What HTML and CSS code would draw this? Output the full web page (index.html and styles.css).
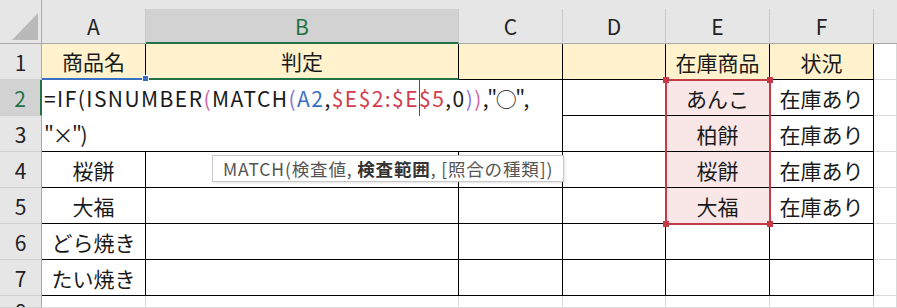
FILE: index.html
```html
<!DOCTYPE html>
<html lang="ja">
<head>
    <meta charset="UTF-8">
    <title>在庫判定</title>
    <link rel="stylesheet" href="styles.css">
</head>
<body>
    <div class="sheet">
        <div class="corner">
            <svg width="42" height="44" viewBox="0 0 42 44"><polygon points="38,13 38,40 12,40" fill="#b9b9b9"/></svg>
        </div>
        <div class="strip"></div>

        <div class="ch">A</div>
        <div class="ch sel">B</div>
        <div class="ch">C</div>
        <div class="ch">D</div>
        <div class="ch">E</div>
        <div class="ch">F</div>
        <div class="ch last"></div>

        <div class="rh">1</div>
        <div class="c y ref-top">商品名<span class="handle"></span></div>
        <div class="c y act-top">判定</div>
        <div class="c y"></div>
        <div class="c y"></div>
        <div class="c y">在庫商品</div>
        <div class="c y">状況</div>
        <div class="g"></div>

        <div class="rh sel">2</div>
        <div class="edit">=IF(ISNUMBER<span class="p2">(</span>MATCH<span class="p3">(</span><span class="r1">A2</span>,<span class="r2">$E$2:$E<span class="caret"></span>$5</span>,0<span class="p3">)</span><span class="p2">)</span><span class="tight">,"○",<br>"×")</span></div>
        <div class="c"></div>
        <div class="c pink">あんこ
            <div class="range">
                <span class="h tl"></span><span class="h tr"></span><span class="h bl"></span><span class="h br"></span>
            </div>
        </div>
        <div class="c">在庫あり</div>
        <div class="g"></div>

        <div class="rh">3</div>
        <div class="c"></div>
        <div class="c pink">柏餅</div>
        <div class="c">在庫あり</div>
        <div class="g"></div>

        <div class="rh">4</div>
        <div class="c">桜餅</div>
        <div class="c"></div>
        <div class="c"></div>
        <div class="c"></div>
        <div class="c pink">桜餅</div>
        <div class="c">在庫あり</div>
        <div class="g"></div>

        <div class="rh">5</div>
        <div class="c">大福</div>
        <div class="c"></div>
        <div class="c"></div>
        <div class="c"></div>
        <div class="c pink">大福</div>
        <div class="c">在庫あり</div>
        <div class="g"></div>

        <div class="rh">6</div>
        <div class="c">どら焼き</div>
        <div class="c"></div>
        <div class="c"></div>
        <div class="c"></div>
        <div class="c"></div>
        <div class="c"></div>
        <div class="g"></div>

        <div class="rh">7</div>
        <div class="c">たい焼き</div>
        <div class="c"></div>
        <div class="c"></div>
        <div class="c"></div>
        <div class="c"></div>
        <div class="c"></div>
        <div class="g"></div>

        <div class="rh cut">8</div>
        <div class="g"></div>
        <div class="g"></div>
        <div class="g"></div>
        <div class="g"></div>
        <div class="g"></div>
        <div class="g"></div>
        <div class="g"></div>

        <div class="tip">MATCH(検査値, <b>検査範囲</b>, [照合の種類])</div>
    </div>
</body>
</html>
```
FILE: styles.css
```css
body {
    margin: 0;
    background-color: #fff;
    font-family: "Noto Sans CJK JP", sans-serif;
}
.sheet {
    position: relative;
    display: grid;
    grid-template-columns: 42px 104px 313px 104px 103px 104px 104px 23px;
    grid-template-rows: 9px 35px repeat(7, 36px) 12px;
    width: 897px;
    height: 308px;
    overflow: hidden;
    font-size: 21px;
    color: #1a1a1a;
}
.sheet > div {
    box-sizing: border-box;
}
.corner {
    grid-row: 1 / 3;
    background-color: #e6e6e6;
    border-right: 1px solid #a8a8a8;
    border-bottom: 1px solid #a8a8a8;
}
.corner svg {
    display: block;
}
.strip {
    grid-column: 2 / -1;
    background-color: #e6e6e6;
}
.ch {
    display: flex;
    align-items: center;
    justify-content: center;
    background-color: #e6e6e6;
    border-right: 1px solid #cacaca;
    border-bottom: 1px solid #a8a8a8;
    font-size: 21px;
    color: #222;
}
.ch.last {
    border-right: none;
}
.ch.sel {
    background-color: #d2d2d2;
    color: #217346;
    border-bottom: 2px solid #217346;
}
.rh {
    display: flex;
    align-items: center;
    justify-content: center;
    background-color: #e6e6e6;
    border-right: 1px solid #a8a8a8;
    border-bottom: 1px solid #d0d0d0;
    font-size: 21px;
    color: #222;
}
.rh.cut {
    align-items: flex-start;
    line-height: 30px;
    overflow: hidden;
}
.rh.sel {
    background-color: #d2d2d2;
    color: #217346;
    border-right: 2px solid #217346;
}
.c {
    display: flex;
    align-items: center;
    justify-content: center;
    border-right: 1px solid #000;
    border-bottom: 1px solid #000;
}
.g {
    border-right: 1px solid #dadada;
    border-bottom: 1px solid #dadada;
}
.y {
    background-color: #fff2cc;
}
.ref-top {
    position: relative;
    border-bottom: 2px solid #3a70c4 !important;
}
.act-top {
    border-bottom: 2px solid #217346 !important;
}
.handle {
    position: absolute;
    right: -4px;
    bottom: -4px;
    width: 5px;
    height: 5px;
    background-color: #3a70c4;
    border: 1px solid #fff;
    z-index: 3;
}
.edit {
    grid-column: 2 / 5;
    grid-row: 4 / 6;
    background-color: #fff;
    border-right: 1px solid #000;
    border-bottom: 1px solid #000;
    padding-left: 2px;
    line-height: 36px;
    letter-spacing: 1.45px;
    white-space: nowrap;
}
.edit .tight {
    letter-spacing: -1.5px;
}
.p2 {
    color: #d265a8;
}
.p3 {
    color: #8a74d8;
}
.r1 {
    color: #3a70c4;
}
.r2 {
    color: #d23d4e;
}
.caret {
    display: inline-block;
    width: 1px;
    height: 36px;
    margin-right: -1px;
    vertical-align: top;
    background-color: #555;
}
.pink {
    position: relative;
    background-color: #f9e7e8;
}
.range {
    position: absolute;
    left: -1px;
    top: -1px;
    width: 106px;
    height: 146px;
    box-sizing: border-box;
    border: 2px solid #c43a46;
    z-index: 2;
}
.range .h {
    position: absolute;
    width: 6px;
    height: 6px;
    background-color: #c43a46;
}
.h.tl { left: -4px; top: -4px; }
.h.tr { right: -4px; top: -4px; }
.h.bl { left: -4px; bottom: -4px; }
.h.br { right: -4px; bottom: -4px; }
.tip {
    position: absolute;
    left: 212px;
    top: 155px;
    height: 27px;
    box-sizing: border-box;
    padding: 0 10px;
    border: 1px solid #c8c8c8;
    background-color: #fff;
    box-shadow: 1px 1px 2px rgba(0, 0, 0, 0.12);
    font-size: 17.5px;
    letter-spacing: 0.85px;
    line-height: 25px;
    color: #555;
    white-space: nowrap;
}
.tip b {
    font-weight: 700;
    color: #333;
}
```
